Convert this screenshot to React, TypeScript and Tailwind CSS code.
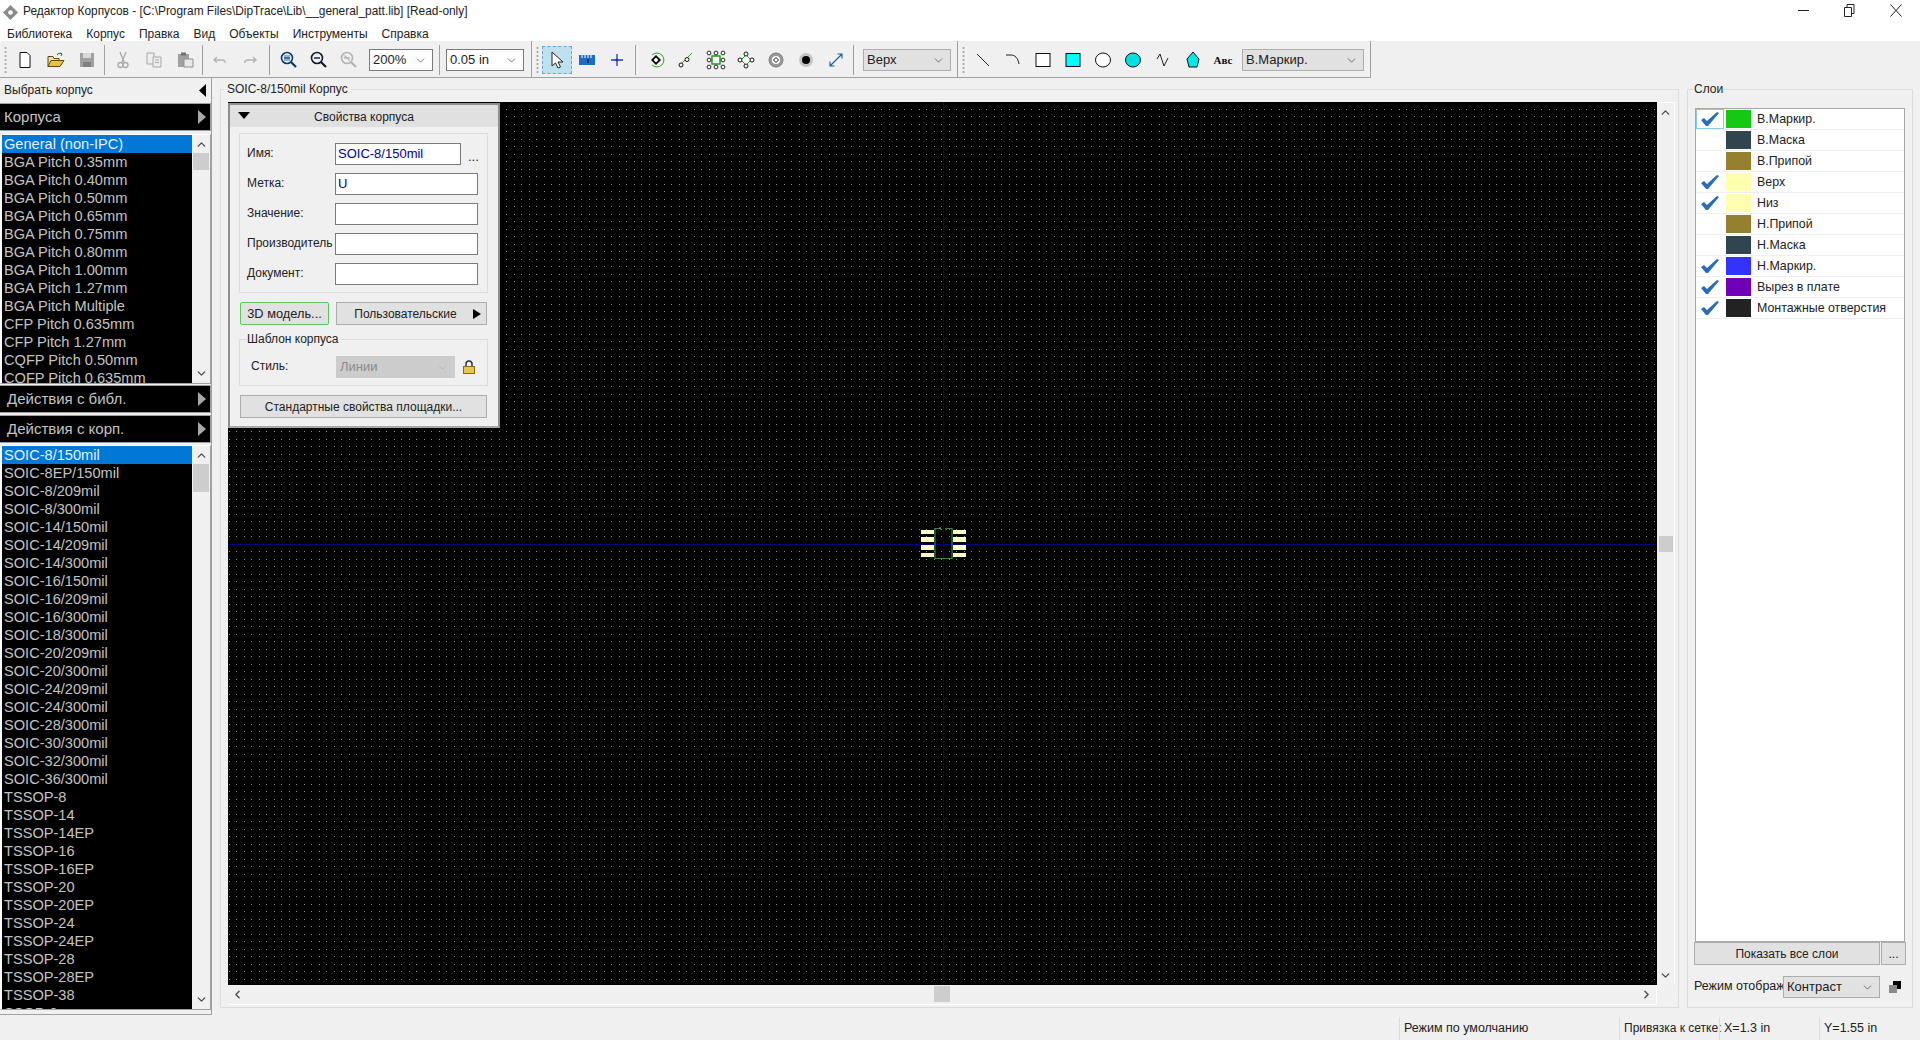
import React from "react";
import { ChevronDown, ChevronLeft, ChevronRight, ChevronUp } from "lucide-react";

const packs = [
  "General (non-IPC)", "BGA Pitch 0.35mm", "BGA Pitch 0.40mm", "BGA Pitch 0.50mm", "BGA Pitch 0.65mm",
  "BGA Pitch 0.75mm", "BGA Pitch 0.80mm", "BGA Pitch 1.00mm", "BGA Pitch 1.27mm", "BGA Pitch Multiple",
  "CFP Pitch 0.635mm", "CFP Pitch 1.27mm", "CQFP Pitch 0.50mm", "CQFP Pitch 0.635mm",
];

const patterns = [
  "SOIC-8/150mil", "SOIC-8EP/150mil", "SOIC-8/209mil", "SOIC-8/300mil", "SOIC-14/150mil", "SOIC-14/209mil",
  "SOIC-14/300mil", "SOIC-16/150mil", "SOIC-16/209mil", "SOIC-16/300mil", "SOIC-18/300mil", "SOIC-20/209mil",
  "SOIC-20/300mil", "SOIC-24/209mil", "SOIC-24/300mil", "SOIC-28/300mil", "SOIC-30/300mil", "SOIC-32/300mil",
  "SOIC-36/300mil", "TSSOP-8", "TSSOP-14", "TSSOP-14EP", "TSSOP-16", "TSSOP-16EP", "TSSOP-20", "TSSOP-20EP",
  "TSSOP-24", "TSSOP-24EP", "TSSOP-28", "TSSOP-28EP", "TSSOP-38", "SSOP-8",
];

const layers = [
  { name: "В.Маркир.", color: "#14c814", on: true },
  { name: "В.Маска", color: "#30454f", on: false },
  { name: "В.Припой", color: "#958030", on: false },
  { name: "Верх", color: "#ffffb0", on: true },
  { name: "Низ", color: "#ffffb0", on: true },
  { name: "Н.Припой", color: "#958030", on: false },
  { name: "Н.Маска", color: "#30454f", on: false },
  { name: "Н.Маркир.", color: "#3333ff", on: true },
  { name: "Вырез в плате", color: "#7000b8", on: true },
  { name: "Монтажные отверстия", color: "#222222", on: true },
];

const menus = ["Библиотека", "Корпус", "Правка", "Вид", "Объекты", "Инструменты", "Справка"];

function Ico({ children }: { children: React.ReactNode }) {
  return (
    <svg width="20" height="20" viewBox="0 0 20 20" fill="none">
      {children}
    </svg>
  );
}

function Slot({ w = "w-[30px]", children }: { w?: string; children: React.ReactNode }) {
  return <div className={`${w} h-[28px] flex items-center justify-center shrink-0`}>{children}</div>;
}

function Sep({ w }: { w: string }) {
  return (
    <div className={`${w} h-[30px] flex justify-center shrink-0`}>
      <div className="w-px h-full bg-[#a0a0a0]" />
    </div>
  );
}

function Grip() {
  return <div className="w-[3px] h-[28px] shrink-0 bg-[radial-gradient(circle,#a8a8a8_1px,transparent_1.2px)] bg-[size:3px_4px]" />;
}

function Combo({ w, text, light = false }: { w: string; text: string; light?: boolean }) {
  return (
    <div className={`${w} h-[22px] shrink-0 flex items-center justify-between pl-[3px] pr-[5px] border text-[13px] ${light ? "bg-white border-[#7a7a7a]" : "bg-[#e1e1e1] border-[#adadad]"}`}>
      <span className="text-[#222]">{text}</span>
      <ChevronDown size={13} strokeWidth={1.3} className="text-[#444]" />
    </div>
  );
}

function Magnifier({ color, sign }: { color: string; sign: "in" | "out" | "fit" }) {
  return (
    <Ico>
      <circle cx="8" cy="8" r="5.5" stroke={color} strokeWidth="1.6" fill={sign === "fit" ? "none" : "#e8f4ff"} />
      <path d="M5 8h6" stroke={color} strokeWidth="1.4" />
      {sign === "in" && <path d="M5 6h6M5 10h6" stroke="#2a6db5" strokeWidth="1.2" />}
      {sign === "fit" && <path d="M5.5 5.5l5 5" stroke={color} strokeWidth="1.2" />}
      <path d="M12 12l5 5" stroke={color} strokeWidth="2.2" />
    </Ico>
  );
}

function ListBox({ items, h, thumbTop, thumbH }: { items: string[]; h: string; thumbTop: string; thumbH: string }) {
  return (
    <div className={`${h} flex border border-[#a0a0a0] border-l-white border-t-white shrink-0 bg-white pl-px`}>
      <div className="w-[191px] bg-black overflow-hidden">
        {items.map((name, i) => (
          <div key={name} className={`h-[18px] leading-[18px] pl-[2px] text-[14.6px] whitespace-nowrap ${i === 0 ? "bg-[#0078d7] text-[#e8f2fa]" : "text-[#c4c4c4]"}`}>
            {name}
          </div>
        ))}
      </div>
      <div className="relative w-[18px] bg-[#f0f0f0] flex flex-col justify-between items-center py-[3px]">
        <ChevronUp size={13} strokeWidth={2.6} className="text-[#505050]" />
        <div className={`absolute left-px w-[16px] bg-[#cdcdcd] ${thumbTop} ${thumbH}`} />
        <ChevronDown size={13} strokeWidth={2.6} className="text-[#505050]" />
      </div>
    </div>
  );
}

function BlackHeader({ text, pad }: { text: string; pad: string }) {
  return (
    <div className={`h-[28px] shrink-0 bg-black border border-[#a0a0a0] border-l-0 flex items-center justify-between pr-[4px] ${pad} text-[15px] text-[#c4c4c4]`}>
      <span>{text}</span>
      <svg width="8" height="14" viewBox="0 0 8 14">
        <path d="M0 0l8 7-8 7z" fill="#a8a8a8" />
      </svg>
    </div>
  );
}

function FormRow({ label, value, short }: { label: string; value?: string; short?: boolean }) {
  return (
    <div className="flex items-center h-[22px]">
      <span className="w-[88px] shrink-0 whitespace-nowrap text-[12px] text-[#222] -mt-[2px]">{label}</span>
      <div className={`h-[22px] ${short ? "w-[126px]" : "w-[143px]"} bg-white border border-[#7a7a7a] pl-[2px] text-[13px] leading-[19px] text-[#000090]`}>{value}</div>
      {short && <span className="ml-[7px] text-[13px] leading-none text-[#222] mt-[4px]">...</span>}
    </div>
  );
}

function PropsPanel() {
  return (
    <div className="absolute left-0 top-px w-[272px] h-[325px] bg-[#f0f0f0] border-2 border-[#8e8e8e] border-b-[#a8a8a8]">
      <div className="h-[22px] bg-[#e0e0e0] relative flex items-center justify-center pt-px text-[12px] text-[#222]">
        <svg className="absolute left-[8px] top-[7px]" width="12" height="7" viewBox="0 0 12 7">
          <path d="M0 0h12L6 7z" fill="#000" />
        </svg>
        Свойства корпуса
      </div>
      <div className="ml-[9px] mt-[6px] w-[249px] h-[160px] border border-[#dcdcdc] pl-[7px] pt-[9px] flex flex-col gap-[8px]">
        <FormRow label="Имя:" value="SOIC-8/150mil" short />
        <FormRow label="Метка:" value="U" />
        <FormRow label="Значение:" />
        <FormRow label="Производитель" />
        <FormRow label="Документ:" />
      </div>
      <div className="ml-[10px] mt-[9px] flex gap-[7px]">
        <div className="w-[89px] h-[23px] bg-[#e1e1e1] border border-[#5cc85c] rounded-[2px] flex items-center justify-center text-[12.8px] text-[#222]">3D модель...</div>
        <div className="relative w-[151px] h-[23px] bg-[#e1e1e1] border border-[#adadad] flex items-center justify-center pr-[12px] text-[12px] text-[#222]">
          Пользовательские
          <svg className="absolute right-[5px] top-[6px]" width="8" height="10" viewBox="0 0 8 10">
            <path d="M0 0l8 5-8 5z" fill="#000" />
          </svg>
        </div>
      </div>
      <div className="relative ml-[9px] mt-[14px] w-[249px] h-[47px] border border-[#dcdcdc] flex items-center pl-[11px] pt-[9px]">
        <span className="absolute left-[7px] -top-[10px] bg-[#f0f0f0] pr-px text-[12px] text-[#222]">Шаблон корпуса</span>
        <span className="w-[85px] text-[12px] text-[#222] -mt-[2px]">Стиль:</span>
        <div className="w-[119px] h-[22px] bg-[#cccccc] flex items-center justify-between pl-[4px] pr-[6px] text-[13px] text-[#8a8a8a]">
          Линии
          <ChevronDown size={13} strokeWidth={1.2} className="text-[#aaa]" />
        </div>
        <svg className="ml-[8px]" width="12" height="14" viewBox="0 0 12 14">
          <path d="M3 7V4a3 3 0 016 0v3" stroke="#333" strokeWidth="1.5" fill="none" />
          <rect x="0.5" y="6.5" width="11" height="7" fill="#e8c84a" stroke="#8a6d10" />
        </svg>
      </div>
      <div className="ml-[10px] mt-[9px] w-[247px] h-[23px] bg-[#e1e1e1] border border-[#adadad] flex items-center justify-center text-[12px] text-[#222]">
        Стандартные свойства площадки...
      </div>
    </div>
  );
}

// sheet grid: the source scales an even grid, so the dots alternate 8px and 7px apart
function GridDots() {
  return (
    <svg className="absolute inset-0" width="1429" height="883" shapeRendering="crispEdges">
      <defs>
        <pattern id="dots" x="8" y="14" width="15" height="15" patternUnits="userSpaceOnUse">
          <rect x="0" y="0" width="1" height="1" fill="#8c8c8c" />
          <rect x="8" y="0" width="1" height="1" fill="#8c8c8c" />
          <rect x="0" y="8" width="1" height="1" fill="#8c8c8c" />
          <rect x="8" y="8" width="1" height="1" fill="#8c8c8c" />
        </pattern>
      </defs>
      <rect width="1429" height="883" fill="url(#dots)" />
    </svg>
  );
}

function Footprint() {
  const pads = [
    [530, 4],
    [537, 5],
    [545, 5],
    [553, 4],
  ];
  return (
    <svg className="absolute left-1/2 top-1/2 -translate-x-[23px] -translate-y-[17px]" width="46" height="33" viewBox="919 527 46 33">
      {pads.map(([y, h]) => (
        <g key={y}>
          <rect x="920" y={y} width="13" height={h} fill="#ffffcc" />
          <rect x="952" y={y} width="13" height={h} fill="#ffffcc" />
        </g>
      ))}
      <path d="M939 528.500h-5v30h17v-30h-5" stroke="#2f8a3c" fill="none" strokeWidth="1.2" />
      <path d="M939 527v2h1M944 529h2" stroke="#8fbf8f" fill="none" strokeWidth="1" />
    </svg>
  );
}

export default function App() {
  return (
    <div className="w-[1920px] h-[1040px] flex flex-col bg-[#f0f0f0] overflow-hidden font-['Liberation_Sans',sans-serif] text-[#222]">
      {/* title + menu */}
      <div className="h-[41px] bg-white shrink-0 relative">
        <div className="h-[24px] flex items-center pl-[3px] text-[11.9px] text-[#222]">
          <svg width="15" height="15" viewBox="0 0 16 16" className="mr-[5px]">
            <path d="M8 0l8 8-8 8-8-8z" fill="#8a8a8a" />
            <circle cx="8" cy="8" r="2.5" fill="#fff" />
          </svg>
          Редактор Корпусов - [C:\Program Files\DipTrace\Lib\__general_patt.lib] [Read-only]
        </div>
        <div className="h-[17px] flex items-center pl-[7px] pt-[2px] gap-[14px] text-[12px]">
          {menus.map((m) => (
            <span key={m}>{m}</span>
          ))}
        </div>
        <div className="absolute right-[18px] top-[4px] flex items-center gap-[35px]">
          <svg width="11" height="11" viewBox="0 0 11 11"><path d="M0 5.5h11" stroke="#222" /></svg>
          <svg width="11" height="13" viewBox="0 0 11 13"><path d="M0.5 3.5h7v9h-7zM3 3.5V.5h7v9H7.5" stroke="#222" fill="none" /></svg>
          <svg width="12" height="13" viewBox="0 0 12 13"><path d="M.5.5l11 12M11.5.5l-11 12" stroke="#222" fill="none" /></svg>
        </div>
      </div>

      {/* toolbar */}
      <div className="h-[37px] w-[1371px] shrink-0 flex items-center border-b border-r border-[#a0a0a0] pl-[4px] pt-[2px]">
        <Grip />
        <div className="w-[2px]" />
        <Slot w="w-[31px]">
          <Ico><path d="M5 2.5h7l3 3v12H5z" fill="#fff" stroke="#111" /></Ico>
        </Slot>
        <Slot w="w-[31px]">
          <Ico>
            <path d="M2 16.5V6.5h5l1 2h5v8z" fill="#f5dd8a" stroke="#5a4a10" />
            <path d="M2 16.5l3-6h13l-4 6z" fill="#e8c04a" stroke="#5a4a10" />
            <path d="M11 5c1-2 3-2 5-1m0 0l-2-1m2 1l-1 2" stroke="#2a6a2a" />
          </Ico>
        </Slot>
        <Slot w="w-[31px]">
          <Ico>
            <path d="M3 3h14v14H3z" fill="#a0a0a0" />
            <path d="M6 3h8v5H6z" fill="#d8d8d8" />
            <path d="M6 12h8v5H6z" fill="#808080" />
          </Ico>
        </Slot>
        <Sep w="w-[5px]" />
        <Slot w="w-[31px]">
          <Ico>
            <path d="M7 2l4 10M13 2L9 12" stroke="#a8a8a8" strokeWidth="1.3" />
            <circle cx="7.5" cy="15" r="2.5" stroke="#a8a8a8" strokeWidth="1.3" />
            <circle cx="12.5" cy="15" r="2.5" stroke="#a8a8a8" strokeWidth="1.3" />
          </Ico>
        </Slot>
        <Slot w="w-[31px]">
          <Ico>
            <path d="M3 3h7v11H3z" fill="#eee" stroke="#a8a8a8" />
            <path d="M9 7h8v10H9z" fill="#eee" stroke="#a8a8a8" />
            <path d="M11 10h4M11 12.5h4" stroke="#a8a8a8" />
          </Ico>
        </Slot>
        <Slot w="w-[31px]">
          <Ico>
            <path d="M3 4h11v13H3z" fill="#a0a0a0" />
            <path d="M6 2.5h5v3H6z" fill="#707070" />
            <path d="M9 9h9v8H9z" fill="#e8e8e8" stroke="#909090" />
          </Ico>
        </Slot>
        <Sep w="w-[5px]" />
        <Slot>
          <Ico><path d="M7 7L4 10l3 2.500M4 10H12c2.500 0 3.500 1.500 3 3" stroke="#b4b4b4" strokeWidth="1.4" /></Ico>
        </Slot>
        <Slot>
          <Ico><path d="M13 7l3 3-3 2.500M16 10H8c-2.500 0-3.500 1.500-3 3" stroke="#b4b4b4" strokeWidth="1.4" /></Ico>
        </Slot>
        <Sep w="w-[9px]" />
        <Slot><Magnifier color="#103860" sign="in" /></Slot>
        <Slot><Magnifier color="#1a1a1a" sign="out" /></Slot>
        <Slot><Magnifier color="#b4b4b4" sign="fit" /></Slot>
        <div className="w-[5px]" />
        <Combo w="w-[64px]" text="200%" light />
        <Sep w="w-[13px]" />
        <Combo w="w-[78px]" text="0.05 in" light />
        <div className="w-[7px]" />
        <div className="w-px h-[36px] -mt-[2px] bg-[#a0a0a0]" />
        <div className="w-[4px]" />
        <Grip />
        <div className="w-[3px]" />
        <div className="w-[30px] h-[28px] shrink-0 bg-[#bfe0ef] border border-dashed border-[#60a8d8] flex items-center justify-center">
          <svg width="14" height="20" viewBox="0 0 14 20"><path d="M2 2v14l3.5-3 2.5 5 2.5-1-2.500-5H13z" fill="#fff" stroke="#222" /></svg>
        </div>
        <Slot>
          <svg width="16" height="10" viewBox="0 0 16 10">
            <path d="M0 0h16v10H0z" fill="#1a6ec8" />
            <path d="M3 0v3M6 0v3M9 0v3M12 0v3" stroke="#fff" />
            <path d="M9 4v4" stroke="#111" strokeWidth="1.3" />
          </svg>
        </Slot>
        <Slot>
          <Ico><path d="M4 10h12M10 4v12" stroke="#1a3ea8" strokeWidth="1.3" /><circle cx="10" cy="10" r="1.5" fill="#1a3ea8" /></Ico>
        </Slot>
        <Sep w="w-[6px]" />
        <div className="w-[3px]" />
        <Slot>
          <Ico>
            <path d="M6 5a7 7 0 110 10" stroke="#28a028" fill="none" />
            <path d="M10 5l5 5-5 5-5-5z" fill="#000" />
            <path d="M10 7.500l2.500 2.500-2.500 2.500-2.500-2.500z" fill="#fff" />
          </Ico>
        </Slot>
        <Slot>
          <Ico>
            <path d="M3 16L16 3" stroke="#28a028" />
            <circle cx="5" cy="15" r="2" fill="#fff" stroke="#111" />
            <circle cx="11" cy="9.500" r="2" fill="#fff" stroke="#111" />
          </Ico>
        </Slot>
        <Slot>
          <Ico>
            <rect x="6" y="6" width="8" height="8" fill="#fff" stroke="#28a028" strokeWidth="1.6" />
            {[3, 10, 17].flatMap((x) => [3, 10, 17].map((y) => (x === 10 && y === 10 ? null : <circle key={`${x}-${y}`} cx={x} cy={y} r="1.9" fill="#fff" stroke="#111" strokeWidth="0.9" />)))}
          </Ico>
        </Slot>
        <Slot>
          <Ico>
            <path d="M10 5l5 5-5 5-5-5z" fill="#fff" stroke="#28a028" />
            <circle cx="10" cy="4" r="2" fill="#fff" stroke="#111" />
            <circle cx="10" cy="16" r="2" fill="#fff" stroke="#111" />
            <circle cx="4" cy="10" r="2" fill="#fff" stroke="#111" />
            <circle cx="16" cy="10" r="2" fill="#fff" stroke="#111" />
          </Ico>
        </Slot>
        <Slot>
          <Ico>
            <circle cx="10" cy="10" r="7" fill="#9a9a9a" stroke="#7c7c7c" />
            <circle cx="10" cy="10" r="4" fill="#fff" />
            <path d="M10 7.500l2.500 2.500-2.500 2.500-2.500-2.500z" fill="#fff" stroke="#111" strokeWidth="1" />
          </Ico>
        </Slot>
        <Slot>
          <Ico>
            <circle cx="10" cy="10" r="7" fill="#c4c4c4" />
            <circle cx="10" cy="10" r="4" fill="#000" />
          </Ico>
        </Slot>
        <Slot>
          <Ico>
            <path d="M4 16L16 4M11.500 4H16v4.500M4 11.500V16h4.500" stroke="#1f5f8f" strokeWidth="1.1" />
          </Ico>
        </Slot>
        <Sep w="w-[4px]" />
        <div className="w-[8px]" />
        <Combo w="w-[88px]" text="Верх" />
        <div className="w-[6px]" />
        <div className="w-px h-[36px] -mt-[2px] bg-[#a0a0a0]" />
        <div className="w-[4px]" />
        <Grip />
        <div className="w-[3px]" />
        <Slot><Ico><path d="M4 4l12 12" stroke="#222" /></Ico></Slot>
        <Slot><Ico><path d="M3 5h5c4 0 7 3 8 9" stroke="#222" /></Ico></Slot>
        <Slot><Ico><rect x="3" y="3.500" width="14" height="13" fill="#fff" stroke="#111" /></Ico></Slot>
        <Slot><Ico><rect x="3" y="3.500" width="14" height="13" fill="#00ffff" stroke="#111" /></Ico></Slot>
        <Slot><Ico><ellipse cx="10" cy="10" rx="7.500" ry="7" fill="#fff" stroke="#111" /></Ico></Slot>
        <Slot><Ico><ellipse cx="10" cy="10" rx="7.500" ry="7" fill="#00e0e0" stroke="#111" /></Ico></Slot>
        <Slot><Ico><path d="M4 9l3-5 4 12 4-8" stroke="#222" /></Ico></Slot>
        <Slot><Ico><path d="M10 2l6 7-2 8H6L4 9z" fill="#00e8e8" stroke="#111" /></Ico></Slot>
        <Slot><span className="font-['Liberation_Serif',serif] text-[11px] font-bold text-[#111]">Авс</span></Slot>
        <div className="w-[4px]" />
        <Combo w="w-[122px]" text="В.Маркир." />
      </div>

      {/* main */}
      <div className="flex-1 min-h-0 flex">
        {/* left */}
        <div className="w-[212px] h-[937px] shrink-0 flex flex-col border-b border-r border-[#a0a0a0]">
          <div className="h-[25px] shrink-0 flex items-center justify-between pl-[4px] pr-[5px] text-[12px]">
            <span className="-mt-px">Выбрать корпус</span>
            <svg width="7" height="13" viewBox="0 0 7 13"><path d="M7 0L0 6.500 7 13z" fill="#000" /></svg>
          </div>
          <BlackHeader text="Корпуса" pad="pl-[4px]" />
          <div className="h-[3px] shrink-0" />
          <ListBox items={packs} h="h-[250px]" thumbTop="top-[18px]" thumbH="h-[17px]" />
          <div className="h-px shrink-0" />
          <BlackHeader text="Действия с библ." pad="pl-[7px]" />
          <div className="h-[2px] shrink-0" />
          <BlackHeader text="Действия с корп." pad="pl-[7px]" />
          <div className="h-[2px] shrink-0" />
          <ListBox items={patterns} h="h-[565px]" thumbTop="top-[18px]" thumbH="h-[28px]" />
        </div>

        {/* canvas group */}
        <div className="w-[1467px] shrink-0 pl-[8px] pt-[11px]">
          <div className="relative w-[1459px] h-[919px] border border-[#dcdcdc] pl-[7px] pt-[12px]">
            <span className="absolute left-[3px] -top-[10px] bg-[#f0f0f0] px-[3px] text-[12px] text-[#222]">SOIC-8/150mil Корпус</span>
            <div className="grid grid-cols-[1429px_18px] grid-rows-[883px_20px]">
              <div className="relative bg-black overflow-hidden">
                <GridDots />
                <div className="absolute left-1/2 inset-y-0 w-[1.5px] bg-[#000080]" />
                <div className="absolute top-1/2 inset-x-0 h-[1.5px] bg-[#000080]" />
                <Footprint />
                <PropsPanel />
              </div>
              <div className="relative bg-[#f0f0f0] border-t border-r border-white flex flex-col justify-between items-center py-[3px]">
                <ChevronUp size={13} strokeWidth={2.6} className="text-[#505050]" />
                <div className="absolute left-[2px] top-[433px] w-[14px] h-[16px] bg-[#cdcdcd]" />
                <ChevronDown size={13} strokeWidth={2.6} className="text-[#505050]" />
              </div>
              <div className="relative bg-[#f0f0f0] border-b border-r border-white flex justify-between items-center px-[3px]">
                <ChevronLeft size={13} strokeWidth={2.6} className="text-[#505050]" />
                <div className="absolute left-1/2 -translate-x-1/2 top-[1px] w-[16px] h-[16px] bg-[#cdcdcd]" />
                <ChevronRight size={13} strokeWidth={2.6} className="text-[#505050]" />
              </div>
              <div />
            </div>
          </div>
        </div>

        {/* layers */}
        <div className="flex-1 pl-[8px] pt-[11px]">
          <div className="relative w-[226px] h-[919px] border border-[#dcdcdc] pl-[7px] pt-[18px] flex flex-col">
            <span className="absolute left-[5px] -top-[10px] bg-[#f0f0f0] px-[1px] text-[12px] text-[#222]">Слои</span>
            <div className="w-[210px] h-[834px] bg-white border border-[#a8a8a8] shrink-0">
              {layers.map((l, i) => (
                <div key={l.name} className="h-[21px] flex items-center border-b border-[#f0f0f0] text-[12.4px] text-[#222]">
                  <div className={`w-[28px] h-[20px] flex items-center justify-center ${i === 0 ? "border border-[#8ccbf0]" : ""}`}>
                    {l.on && (
                      <svg width="20" height="16" viewBox="0 0 20 16">
                        <path d="M1 9l3-2 3 3L17 1l2 1-11 13h-2z" fill="#2a6db5" />
                      </svg>
                    )}
                  </div>
                  <div className="w-[2px]" />
                  <div className="w-[25px] h-[18px]" style={{ background: l.color }} />
                  <span className="ml-[6px] whitespace-nowrap">{l.name}</span>
                </div>
              ))}
            </div>
            <div className="flex gap-px -ml-px">
              <div className="w-[186px] h-[23px] bg-[#e1e1e1] border border-[#adadad] flex items-center justify-center text-[12px]">Показать все слои</div>
              <div className="w-[25px] h-[23px] bg-[#e1e1e1] border border-[#adadad] flex items-center justify-center text-[12px]">...</div>
            </div>
            <div className="flex items-center -ml-px mt-[11px]">
              <span className="w-[89px] overflow-hidden whitespace-nowrap text-[12.5px] -mt-[2px]">Режим отображения</span>
              <Combo w="w-[97px]" text="Контраст" />
              <svg className="ml-[9px]" width="12" height="12" viewBox="0 0 12 12">
                <rect x="4" y="0" width="8" height="8" fill="#000" />
                <rect x="0" y="4" width="8" height="8" fill="#8a8a8a" />
              </svg>
            </div>
          </div>
        </div>
      </div>

      {/* status bar */}
      <div className="h-[25px] shrink-0 flex text-[12.5px] text-[#222] pt-[2px]">
        <div className="w-[1399px]" />
        <div className="w-[220px] border-l border-[#dcdcdc] pl-[4px] leading-[22px]">Режим по умолчанию</div>
        <div className="w-[100px] border-l border-[#dcdcdc] pl-[4px] leading-[22px] text-[12px] whitespace-nowrap">Привязка к сетке:</div>
        <div className="w-[100px] border-l border-[#dcdcdc] pl-[4px] leading-[22px]">X=1.3 in</div>
        <div className="flex-1 border-l border-[#dcdcdc] pl-[4px] leading-[22px]">Y=1.55 in</div>
      </div>
    </div>
  );
}
